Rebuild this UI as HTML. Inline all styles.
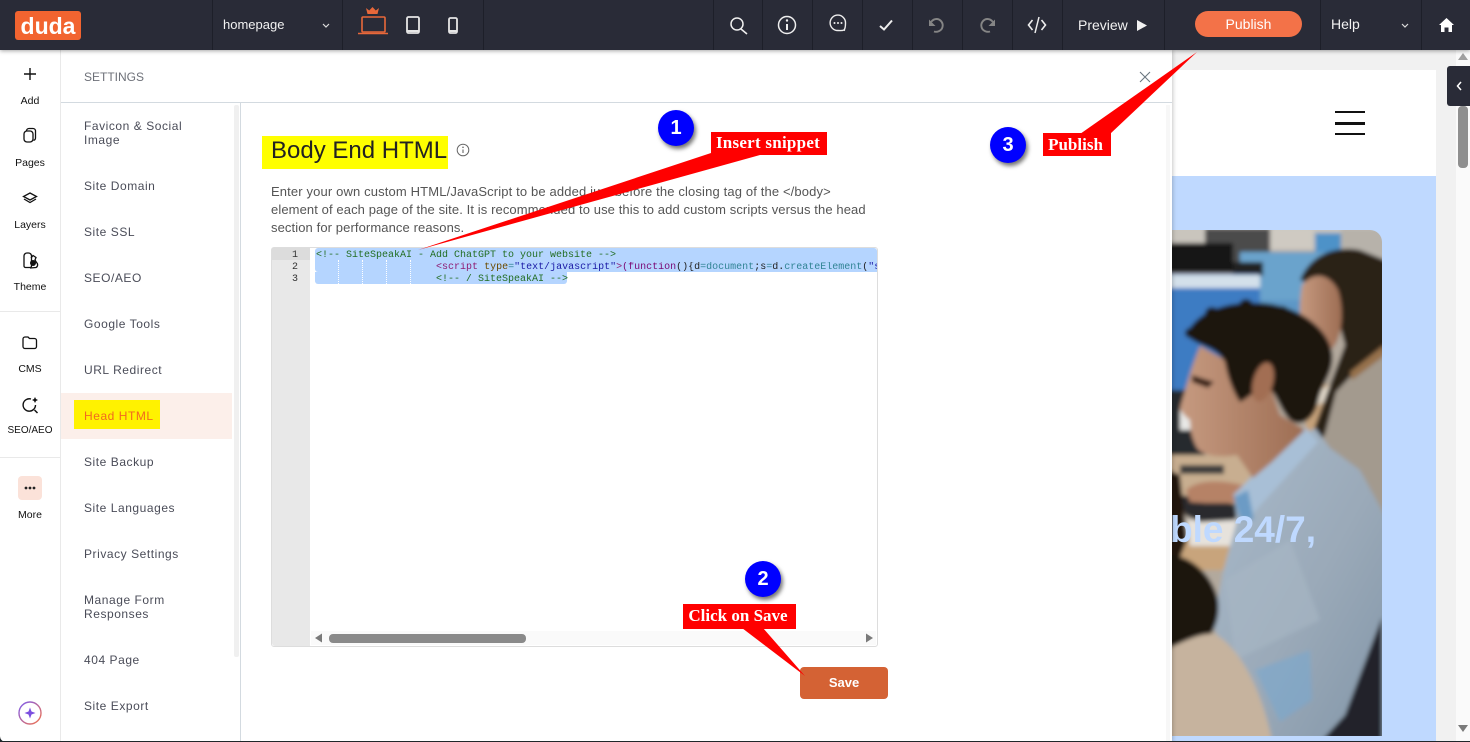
<!DOCTYPE html>
<html lang="en"><head><meta charset="utf-8"><title>Body End HTML</title>
<style>
html,body{margin:0;padding:0;width:1470px;height:742px;overflow:hidden;background:#fff}
body{position:relative;font-family:"Liberation Sans",sans-serif}
.a{position:absolute}
.t{position:absolute;white-space:nowrap;line-height:14px}
.ic{position:absolute;left:0;top:0;width:1470px;height:742px;pointer-events:none}
.lab{position:absolute;left:0;width:60px;text-align:center;font-size:10.5px;line-height:12px;color:#111}
.it{position:absolute;left:84px;font-size:12px;line-height:14px;letter-spacing:.55px;color:#4a4c58;white-space:nowrap}
.d{position:absolute;background:#1d1f29;width:1px;top:0;height:50px}
.desc{position:absolute;left:271px;font-size:13px;line-height:18px;color:#555;white-space:nowrap}
.code{position:absolute;left:316px;width:561px;height:13px;overflow:hidden;font:10px/12px "Liberation Mono",monospace;white-space:pre;color:#222}
.c{color:#236e24}.g{color:#8f1d74}.b{color:#6b4a00}.s{color:#1a1aa6}.f{color:#7a0874}.e{color:#318495}
.ln{position:absolute;left:271px;width:27px;text-align:right;font:10px/12px "Liberation Mono",monospace;color:#333}
.box{position:absolute;background:#f00;color:#fff;font-family:"Liberation Serif",serif;font-weight:bold;text-align:center;white-space:nowrap}
.num{position:absolute;width:36px;height:36px;border-radius:50%;background:#00f;color:#fff;font:bold 20px/36px "Liberation Sans",sans-serif;text-align:center;box-shadow:2px 3px 4px rgba(0,0,0,.55)}
</style></head><body>

<!-- preview site -->
<div class="a" style="left:1172px;top:50px;width:298px;height:692px;background:#f1f1f1"></div>
<div class="a" style="left:1172px;top:70px;width:264px;height:106px;background:#fff"></div>
<div class="a" style="left:1172px;top:176px;width:264px;height:566px;background:#bfd9ff"></div>
<div class="a" style="left:1456px;top:50px;width:14px;height:692px;background:#fafafa"></div>
<div class="a" style="left:1458px;top:106px;width:10px;height:62px;background:#8f8f8f;border-radius:4px"></div>
<div class="a" style="left:1335px;top:111px;width:30px;height:2px;background:#111"></div>
<div class="a" style="left:1335px;top:122px;width:30px;height:3px;background:#111"></div>
<div class="a" style="left:1335px;top:133px;width:30px;height:2px;background:#111"></div>

<svg class="ic" viewBox="0 0 1470 742">
<defs>
<clipPath id="ph"><path d="M1150 230H1370a12 12 0 0 1 12 12V736H1150Z"/></clipPath>
<filter id="bl" x="-5%" y="-5%" width="110%" height="110%"><feGaussianBlur stdDeviation="2.2"/></filter>
<linearGradient id="shirt" x1="0" y1="0" x2="1" y2="1"><stop offset="0" stop-color="#a9bacb"/><stop offset=".55" stop-color="#9aa9b8"/><stop offset="1" stop-color="#8296a8"/></linearGradient>
<linearGradient id="faceg" x1="0" y1="0" x2="1" y2="0"><stop offset="0" stop-color="#c69a80"/><stop offset="1" stop-color="#9d6d53"/></linearGradient>
<linearGradient id="ai" x1="0" y1="0" x2="1" y2="1"><stop offset="0" stop-color="#7b5cf0"/><stop offset="1" stop-color="#f4734a"/></linearGradient>
</defs>
<g clip-path="url(#ph)"><g filter="url(#bl)">
<rect x="1150" y="225" width="240" height="515" fill="#b2a99d"/>
<rect x="1150" y="225" width="240" height="25" fill="#c9c5bd"/>
<rect x="1205" y="228" width="65" height="34" fill="#4b4b4b"/>
<rect x="1272" y="228" width="40" height="22" fill="#cfcac2"/>
<rect x="1315" y="233" width="26" height="26" fill="#4e92c8"/>
<rect x="1341" y="228" width="45" height="40" fill="#b7b2aa"/>
<rect x="1160" y="243" width="73" height="30" fill="#191919"/>
<rect x="1240" y="252" width="85" height="50" fill="#6ba3cc"/>
<rect x="1233" y="262" width="30" height="14" fill="#222"/>
<rect x="1160" y="274" width="100" height="120" fill="#3d7cc3"/>
<rect x="1160" y="275" width="100" height="13" fill="#d3e0ea"/>
<rect x="1260" y="300" width="50" height="90" fill="#5d97c6"/>
<rect x="1160" y="390" width="45" height="66" fill="#282b2e"/>
<rect x="1180" y="410" width="15" height="20" fill="#e8e8e6"/>
<rect x="1160" y="455" width="90" height="60" fill="#c8ae90"/>
<rect x="1180" y="465" width="44" height="9" fill="#3d3d3d"/>
<rect x="1306" y="385" width="34" height="45" fill="#c6a27a"/>
<path d="M1310 395L1340 380V392L1310 410Z" fill="#e2d9cb"/>
<!-- woman -->
<path d="M1300 280C1310 255 1335 245 1360 250L1390 262V350L1352 376L1336 412L1322 440L1310 440L1330 385L1345 345L1330 290Z" fill="#2a2019"/>
<path d="M1302 285C1315 270 1330 275 1338 290C1346 315 1340 345 1330 350C1318 352 1305 345 1304 325C1298 318 1300 300 1302 285Z" fill="url(#faceg)"/>
<path d="M1336 392L1352 375L1390 350V525L1360 472L1322 446Z" fill="#a39a8e"/>
<path d="M1350 372L1384 345V356L1352 380Z" fill="#96714c"/>
<!-- desk, hand -->
<rect x="1150" y="540" width="90" height="30" fill="#c8a47c"/>
<path d="M1187 520H1240L1236 546H1190Z" fill="#e6e2dc"/>
<path d="M1180 495L1240 505L1235 520L1200 522L1185 515Z" fill="#2b2b2d"/>
<path d="M1186 490C1200 478 1225 480 1250 487L1245 503L1205 503L1190 502Z" fill="#b68266"/>
<!-- man shirt -->
<path d="M1253 475L1315 428L1330 448L1360 470L1390 525V740H1270L1213 626L1223 572L1237 520L1234 496Z" fill="url(#shirt)"/>
<path d="M1233 495L1305 427L1318 442L1256 510L1250 520Z" fill="#a8bfd6"/>
<path d="M1234 497L1248 490L1254 520L1240 518Z" fill="#6c9bc5"/>
<path d="M1225 580L1290 540L1320 620L1235 660Z" fill="#a8b8c5" opacity=".6"/>
<path d="M1255 670L1310 650L1312 700L1280 722Z" fill="#7aa8cf" opacity=".6"/>
<path d="M1382 617V740H1322L1345 715Z" fill="#20242b"/>
<!-- man face -->
<path d="M1200 346C1190 370 1187 385 1180 408C1182 414 1187 418 1190 420C1190 432 1193 440 1196 446C1200 456 1220 458 1237 455L1253 478L1272 462L1305 430L1280 415L1268 380L1225 360Z" fill="url(#faceg)"/>
<path d="M1192 375L1214 382L1208 388L1192 382Z" fill="#3b2419"/>
<!-- man hair -->
<path d="M1186 335C1196 312 1225 302 1255 303C1288 302 1326 322 1332 352C1335 372 1322 382 1318 402C1314 420 1300 428 1290 420C1280 410 1276 392 1268 388C1258 385 1250 398 1240 402C1235 395 1228 380 1225 362C1215 345 1200 348 1186 335Z" fill="#1c1310"/>
<g fill="#1c1310"><circle cx="1190" cy="333" r="5"/><circle cx="1212" cy="314" r="7"/><circle cx="1246" cy="306" r="7"/><circle cx="1282" cy="313" r="7"/><circle cx="1315" cy="336" r="8"/><circle cx="1322" cy="372" r="7"/><circle cx="1304" cy="412" r="8"/></g>
<ellipse cx="1263" cy="382" rx="10" ry="20" fill="#a26e52" transform="rotate(15 1263 382)"/>
<!-- foreground -->
<path d="M1150 462L1180 475L1187 540L1177 565L1160 570Z" fill="#20140f"/>
<path d="M1160 556C1185 550 1212 572 1218 600C1222 628 1202 652 1185 652L1150 652Z" fill="#1d120e"/>
<path d="M1150 655C1175 648 1195 632 1215 634C1240 648 1262 690 1272 740H1150Z" fill="#c6b39e"/>
</g></g>
<text x="1316" y="542" text-anchor="end" font-family="Liberation Sans" font-weight="bold" font-size="37" fill="#bfd9ff">ble 24/7,</text>
<path d="M1463 53l5 7h-10z" fill="#a0a0a0"/>
<path d="M1458 725h10l-5 7z" fill="#7a7a7a"/>
</svg>
<div class="a" style="left:1447px;top:66px;width:23px;height:40px;background:#292b37;border-radius:3px 0 0 3px"></div>

<!-- modal -->
<div class="a" style="left:0;top:50px;width:1172px;height:692px;background:#fff;box-shadow:1px 0 4px rgba(0,0,0,.22)"></div>
<div class="a" style="left:60px;top:50px;width:1px;height:692px;background:#e9e9e9"></div>
<div class="a" style="left:61px;top:102px;width:1111px;height:1px;background:#d3dae0"></div>
<div class="a" style="left:240px;top:103px;width:1px;height:639px;background:#d3dae0"></div>
<div class="a" style="left:0;top:311px;width:60px;height:1px;background:#e9e9e9"></div>
<div class="a" style="left:0;top:457px;width:60px;height:1px;background:#e9e9e9"></div>
<div class="a" style="left:234px;top:105px;width:5px;height:552px;background:#f0f0f0;border-radius:2px"></div>
<div class="a" style="left:1166px;top:105px;width:4px;height:637px;background:#f7f7f7"></div>
<div class="t" style="left:84px;top:70px;font-size:12px;color:#6d7078">SETTINGS</div>

<!-- settings list -->
<div class="a" style="left:61px;top:393px;width:171px;height:46px;background:#fcefea"></div>
<div class="a" style="left:74px;top:400px;width:86px;height:29px;background:#fff200"></div>
<div class="it" style="top:119px">Favicon &amp; Social<br>Image</div>
<div class="it" style="top:179px">Site Domain</div>
<div class="it" style="top:225px">Site SSL</div>
<div class="it" style="top:271px">SEO/AEO</div>
<div class="it" style="top:317px">Google Tools</div>
<div class="it" style="top:363px">URL Redirect</div>
<div class="it" style="top:409px;color:#f2691f">Head HTML</div>
<div class="it" style="top:455px">Site Backup</div>
<div class="it" style="top:501px">Site Languages</div>
<div class="it" style="top:547px">Privacy Settings</div>
<div class="it" style="top:593px">Manage Form<br>Responses</div>
<div class="it" style="top:653px">404 Page</div>
<div class="it" style="top:699px">Site Export</div>

<!-- sidebar labels -->
<div class="lab" style="top:95px">Add</div>
<div class="lab" style="top:157px">Pages</div>
<div class="lab" style="top:219px">Layers</div>
<div class="lab" style="top:281px">Theme</div>
<div class="lab" style="top:363px">CMS</div>
<div class="lab" style="top:425px;font-size:10px">SEO/AEO</div>
<div class="lab" style="top:509px">More</div>
<div class="a" style="left:18px;top:476px;width:24px;height:24px;background:#fbe2d9;border-radius:4px"></div>

<!-- content -->
<div class="a" style="left:262px;top:136px;width:186px;height:33px;background:#ff0"></div>
<div class="t" style="left:271px;top:136px;line-height:29px;font-size:24px;color:#222">Body End HTML</div>
<div class="desc" style="top:183px;letter-spacing:.14px">Enter your own custom HTML/JavaScript to be added just before the closing tag of the &lt;/body&gt;</div>
<div class="desc" style="top:201px;letter-spacing:.1px">element of each page of the site. It is recommended to use this to add custom scripts versus the head</div>
<div class="desc" style="top:219px;letter-spacing:.1px">section for performance reasons.</div>

<!-- editor -->
<div class="a" style="left:271px;top:247px;width:605px;height:398px;border:1px solid #ddd;border-radius:3px;background:#fff"></div>
<div class="a" style="left:272px;top:248px;width:38px;height:398px;background:#e8e8e8;border-radius:3px 0 0 3px"></div>
<div class="a" style="left:272px;top:248px;width:38px;height:12px;background:#dcdcdc"></div>
<div class="a" style="left:315px;top:248px;width:562px;height:24px;background:#b5d5ff;border-radius:3px 3px 0 3px"></div>
<div class="a" style="left:315px;top:272px;width:252px;height:12px;background:#b5d5ff;border-radius:0 0 3px 3px"></div>
<div class="a" style="left:338px;top:260px;width:0;height:24px;border-left:1px dotted #fff"></div>
<div class="a" style="left:362px;top:260px;width:0;height:24px;border-left:1px dotted #fff"></div>
<div class="a" style="left:386px;top:260px;width:0;height:24px;border-left:1px dotted #fff"></div>
<div class="a" style="left:410px;top:260px;width:0;height:24px;border-left:1px dotted #fff"></div>
<div class="ln" style="top:250px">1</div><div class="ln" style="top:262px">2</div><div class="ln" style="top:274px">3</div>
<div class="code c" style="top:250px">&lt;!-- SiteSpeakAI - Add ChatGPT to your website --&gt;</div>
<div class="code" style="top:262px">                    <span class="g">&lt;script</span> <span class="b">type</span><span class="e">=</span><span class="s">"text/javascript"</span><span class="g">&gt;</span><span class="f">(function</span>(){d<span class="e">=document</span>;s<span class="e">=</span>d.<span class="e">createElement</span>(<span class="s">"s</span></div>
<div class="code c" style="top:274px">                    &lt;!-- / SiteSpeakAI --&gt;</div>
<div class="a" style="left:311px;top:631px;width:565px;height:14px;background:#fafafa"></div>
<div class="a" style="left:329px;top:634px;width:197px;height:9px;background:#8a8a8a;border-radius:4px"></div>

<!-- save -->
<div class="a" style="left:800px;top:667px;width:88px;height:32px;background:#d46234;border-radius:4px;color:#fff;font:bold 13px/31px 'Liberation Sans',sans-serif;text-align:center">Save</div>

<!-- topbar -->
<div class="a" style="left:0;top:0;width:1470px;height:50px;background:#292b37;box-shadow:0 1px 4px rgba(0,0,0,.35)"></div>
<div class="d" style="left:212px"></div><div class="d" style="left:342px"></div><div class="d" style="left:483px"></div>
<div class="d" style="left:713px"></div><div class="d" style="left:762px"></div><div class="d" style="left:812px"></div>
<div class="d" style="left:862px"></div><div class="d" style="left:912px"></div><div class="d" style="left:962px"></div>
<div class="d" style="left:1012px"></div><div class="d" style="left:1062px"></div><div class="d" style="left:1164px"></div>
<div class="d" style="left:1320px"></div><div class="d" style="left:1421px"></div>
<div class="a" style="left:15px;top:11px;width:66px;height:29px;background:#f26430;border-radius:3px"></div>
<div class="t" style="left:15px;top:12px;width:66px;text-align:center;color:#fff;font:bold 23px/28px 'Liberation Sans',sans-serif">duda</div>
<div class="t" style="left:223px;top:18px;color:#f2f2f2;font-size:13px">homepage</div>
<div class="t" style="left:1078px;top:18px;color:#f2f2f2;font-size:14px">Preview</div>
<div class="a" style="left:1195px;top:11px;width:107px;height:26px;background:#f37248;border-radius:13px;color:#fff;font-size:14px;line-height:26px;text-align:center">Publish</div>
<div class="t" style="left:1331px;top:17px;color:#f2f2f2;font-size:14px">Help</div>

<svg class="ic" viewBox="0 0 1470 742" fill="none">
<!-- chevrons -->
<path d="M323 24l3 3 3-3M1402 24l3 3 3-3" stroke="#ddd" stroke-width="1.2"/>
<!-- devices -->
<g stroke="#e8683a"><rect x="362" y="17" width="23" height="15" rx="1" stroke-width="1.6"/><path d="M358 33.500h30" stroke-width="1.6"/></g>
<path d="M369 14l-1.500-6 3.200 2.500 3.300-3.500 3.300 3.500 3.200-2.500-1.500 6z" fill="#e8683a" transform="translate(-1.500 0)"/>
<rect x="407" y="17" width="12" height="16" rx="1.500" stroke="#e6e6e6" stroke-width="1.800"/><path d="M407 31h12" stroke="#e6e6e6" stroke-width="2"/>
<rect x="449" y="18" width="8" height="15" rx="1.500" stroke="#e6e6e6" stroke-width="1.800"/><path d="M449 31h8" stroke="#e6e6e6" stroke-width="2"/>
<!-- toolbar -->
<circle cx="737" cy="24" r="6" stroke="#eee" stroke-width="1.500"/><path d="M741 29l6 5" stroke="#eee" stroke-width="1.600"/>
<circle cx="787" cy="25" r="8.500" stroke="#eee" stroke-width="1.500"/><path d="M787 24v6" stroke="#eee" stroke-width="2"/><circle cx="787" cy="20.500" r="1.200" fill="#eee"/>
<path d="M844 30c1-1 1.500-3.500 1.500-7a7.700 7.700 0 1 0-7.500 7.500c2.500 0 4 .5 6 -.5l1 0.500" stroke="#eee" stroke-width="1.400"/><circle cx="834.500" cy="23" r="1" fill="#eee"/><circle cx="838" cy="23" r="1" fill="#eee"/><circle cx="841.500" cy="23" r="1" fill="#eee"/>
<path d="M880 26l4 3.500 8-9" stroke="#eee" stroke-width="2"/>
<g><path d="M934 31.500c3 1 7.500-.5 8.500-4.500c1-4-2-8-6-8c-2.200 0-3.800 1-5.300 2.800" stroke="#858585" stroke-width="1.900"/><path d="M929 19.500v6.500h6.500z" fill="#858585"/></g>
<g transform="matrix(-1 0 0 1 1924 0)"><path d="M934 31.500c3 1 7.500-.5 8.500-4.500c1-4-2-8-6-8c-2.200 0-3.800 1-5.300 2.800" stroke="#858585" stroke-width="1.900"/><path d="M929 19.500v6.500h6.500z" fill="#858585"/></g>
<path d="M1032.500 20l-4 5 4 5M1041.500 20l4 5-4 5" stroke="#eee" stroke-width="1.600"/><path d="M1039 17l-4 16" stroke="#eee" stroke-width="1.500"/>
<path d="M1137 20l10 5.500-10 5.500z" fill="#f2f2f2"/>
<path d="M1439 25l7.500-7 7.500 7h-2v7h-3.500v-4.500h-4v4.500h-3.500v-7z" fill="#fff"/>
<path d="M1461 82l-3.500 4 3.500 4" stroke="#fff" stroke-width="1.500"/>
<path d="M1140 72l10 10M1150 72l-10 10" stroke="#6b7680" stroke-width="1.100"/>
<!-- sidebar icons -->
<path d="M30 68v12M24 74h12" stroke="#111" stroke-width="1.400"/>
<path d="M26.500 132.500v-1.500a2.500 2.500 0 0 1 2.500-2.500h4a2.500 2.500 0 0 1 2.500 2.500v7a2.500 2.500 0 0 1-2 2.400" stroke="#111" stroke-width="1.300"/><rect x="24" y="131" width="9" height="11" rx="3" stroke="#111" stroke-width="1.300" fill="#fff"/>
<path d="M30 193l6.500 3.500-6.500 3.500-6.500-3.500z" stroke="#111" stroke-width="1.300"/><path d="M24 199l6 3.500 6-3.500" stroke="#111" stroke-width="1.300"/>
<path d="M24 266v-10a3 3 0 0 1 3-3h1.500a3 3 0 0 1 3 3v10a1.500 1.500 0 0 1-1.500 1.500h-4.500a1.500 1.500 0 0 1-1.500-1.500z" stroke="#111" stroke-width="1.300"/><path d="M31 258l2-2.500 3 2-1 2.500 1.500 2.500a3 3 0 0 1-.5 5l-6 0.500" stroke="#111" stroke-width="1.300"/><circle cx="33" cy="263" r="3" fill="#111"/>
<path d="M24 340a2 2 0 0 1 2-2h3l1.500 1.500h5a2 2 0 0 1 2 2v6a2 2 0 0 1-2 2h-9.500a2 2 0 0 1-2-2z" stroke="#111" stroke-width="1.300" transform="translate(-1 -1)"/>
<path d="M31 399a6.200 6.200 0 1 0 4.500 6" stroke="#111" stroke-width="1.400"/><path d="M34.500 410l3 3" stroke="#111" stroke-width="1.500"/><path d="M35 397l1 2 2 1-2 1-1 2-1-2-2-1 2-1z" fill="#111"/>
<circle cx="26" cy="488" r="1.400" fill="#222"/><circle cx="30" cy="488" r="1.400" fill="#222"/><circle cx="34" cy="488" r="1.400" fill="#222"/>
<circle cx="30" cy="713" r="11" stroke="url(#ai)" stroke-width="1.400"/><path d="M30 707.500l1.500 4 4 1.500-4 1.500-1.500 4-1.500-4-4-1.500 4-1.500z" fill="#7b4fe0"/>
<!-- info -->
<circle cx="463" cy="150" r="5.800" stroke="#666" stroke-width="1"/><path d="M463 149.500v3.500" stroke="#666" stroke-width="1.100"/><circle cx="463" cy="147.300" r=".8" fill="#666"/>
<!-- editor arrows -->
<path d="M315 638l7-4.500v9z" fill="#7a7a7a"/><path d="M873 638l-7-4.500v9z" fill="#7a7a7a"/>
<!-- bottom edge -->
<path d="M0 741h1470v1H0z" fill="#20262a"/><path d="M0 736v6h6a6 6 0 0 1-6-6z" fill="#20262a"/>
<!-- callout wedges -->
<path d="M418 250L711 153L760 155Z" fill="#f00"/>
<path d="M1197 52L1080 134H1110Z" fill="#f00"/>
<path d="M805 676L742 628H763Z" fill="#f00"/>
</svg>

<!-- callouts -->
<div class="box" style="left:711px;top:132px;width:116px;height:23px;font-size:17px;line-height:22px;letter-spacing:.25px;text-indent:-2px">Insert snippet</div>
<div class="box" style="left:1043px;top:133px;width:68px;height:23px;font-size:17px;line-height:23px;text-indent:-3px">Publish</div>
<div class="box" style="left:683px;top:604px;width:113px;height:25px;font-size:17px;line-height:24px;text-indent:-3px">Click on Save</div>
<div class="num" style="left:658px;top:110px">1</div>
<div class="num" style="left:745px;top:561px">2</div>
<div class="num" style="left:990px;top:127px">3</div>
</body></html>
